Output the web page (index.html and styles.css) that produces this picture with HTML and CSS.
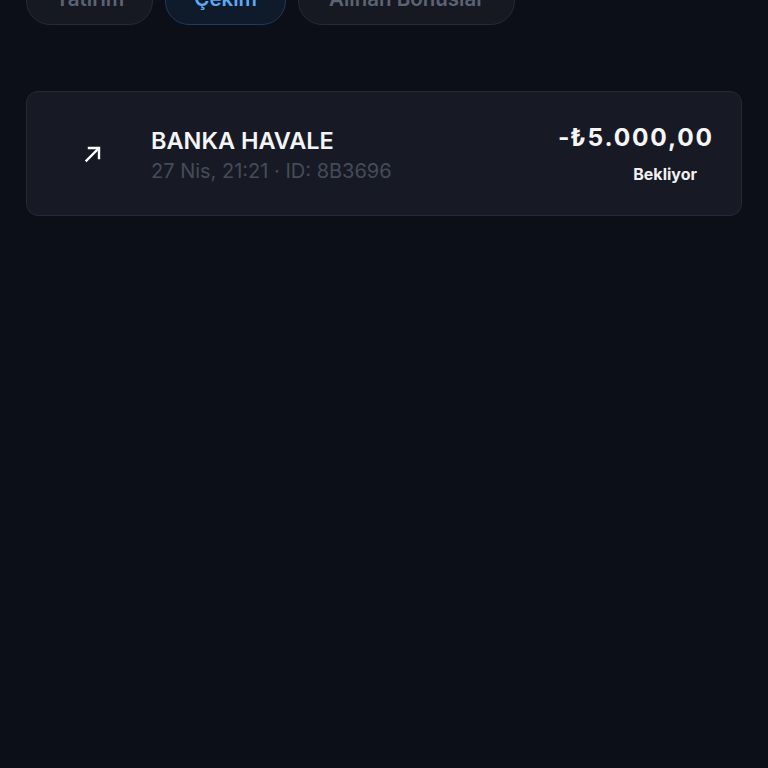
FILE: index.html
```html
<!DOCTYPE html>
<html lang="tr">
<head>
<meta charset="utf-8">
<link rel="stylesheet" href="styles.css">
</head>
<body>
<div class="page">
  <div class="tabs">
    <div class="tab">Yatırım</div>
    <div class="tab active">Çekim</div>
    <div class="tab">Alınan Bonuslar</div>
  </div>
  <div class="card">
    <div class="icon">
      <svg width="20" height="20" viewBox="0 0 20 20" fill="none" stroke="#ffffff" stroke-width="2.4" stroke-linecap="square">
        <path d="M3.5 16.5 L15.5 4.5"/>
        <path d="M6 4 H16 V14"/>
      </svg>
    </div>
    <div class="info">
      <div class="title">BANKA HAVALE</div>
      <div class="sub">27 Nis, 21:21 · ID: 8B3696</div>
    </div>
    <div class="right">
      <div class="amount"><span class="minus">-</span>₺5.000,00</div>
      <div class="status">Bekliyor</div>
    </div>
  </div>
</div>
</body>
</html>
```
FILE: styles.css
```css
html, body {
  margin: 0;
  padding: 0;
  background: #0c0f17;
  height: 100%;
}
body {
  font-family: Inter, "Noto Sans", sans-serif;
  color: #ffffff;
  overflow: hidden;
}
.page {
  padding: 0 26px;
}
.tabs {
  display: flex;
  gap: 12px;
  margin-top: -29px;
}
.tab {
  height: 52px;
  padding: 0 28px;
  border-radius: 24px;
  border: 1px solid #262a36;
  background: #161922;
  color: #5d6373;
  font-size: 20.5px;
  font-weight: 600;
  display: flex;
  align-items: center;
}
.tab:last-child {
  padding: 0 30px;
}
.tab.active {
  background: #0f1a2b;
  border-color: #1f3a5c;
  color: #5aa9f5;
}
.card {
  margin-top: 66px;
  height: 123px;
  border: 1px solid #262a35;
  border-radius: 12px;
  background: #171a24;
  display: flex;
  align-items: center;
  padding: 0 29px 0 38px;
}
.icon {
  width: 56px;
  height: 56px;
  display: flex;
  align-items: center;
  justify-content: center;
  margin-right: 30px;
}
.info {
  flex: 1;
  display: flex;
  flex-direction: column;
  gap: 4px;
  margin-top: 2px;
}
.title {
  font-size: 23.5px;
  font-weight: 600;
  color: #f3f4f6;
  line-height: 28px;
}
.sub {
  font-size: 20px;
  color: #454b5a;
  line-height: 24px;
}
.right {
  display: flex;
  flex-direction: column;
  align-items: flex-end;
  gap: 12px;
  margin-top: -2px;
}
.amount {
  font-size: 24.5px;
  font-weight: 700;
  letter-spacing: 1.8px;
  margin-right: -1.8px;
  line-height: 30px;
  color: #f5f5f5;
}
.minus {
  letter-spacing: 0.5px;
}
.status {
  font-size: 16px;
  font-weight: 700;
  color: #f0f0f0;
  padding: 0 15px;
  line-height: 20px;
}
```
